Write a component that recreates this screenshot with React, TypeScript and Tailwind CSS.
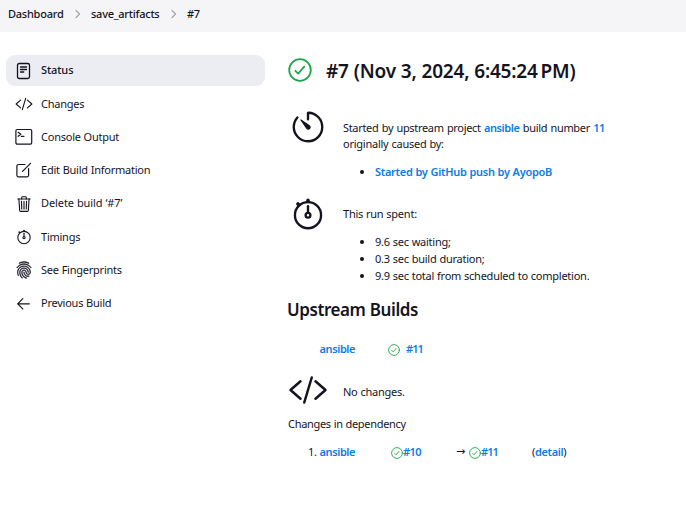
import type { ReactNode } from "react";
import {
  IoCodeSlashOutline,
  IoFingerPrintOutline,
  IoStopwatchOutline,
  IoTimerOutline,
  IoTrashOutline,
} from "react-icons/io5";

function DocumentIcon() {
  return (
    <svg viewBox="0 0 18 18" className="size-[18px]" fill="none" stroke="currentColor" strokeWidth="1.3" strokeLinecap="round">
      <rect x="2.500" y="1.500" width="12" height="15" rx="1.8" />
      <path d="M5.500 5h6M5.500 7.500h6M5.500 10h3.200" />
    </svg>
  );
}

function TerminalIcon() {
  return (
    <svg viewBox="0 0 18 18" className="size-[18px]" fill="none" stroke="currentColor" strokeWidth="1.2" strokeLinecap="round" strokeLinejoin="round">
      <rect x="0.900" y="1.500" width="15.800" height="14.600" rx="1.300" />
      <path d="M3.200 4.300l2.600 2-2.600 2M6.300 8.400h2.600" />
    </svg>
  );
}

function EditIcon() {
  return (
    <svg viewBox="0 0 18 18" className="size-[18px]" fill="none" stroke="currentColor" strokeWidth="1.2" strokeLinecap="round" strokeLinejoin="round">
      <path d="M10 3.500H3.500A1.600 1.600 0 0 0 1.900 5.100V14.300A1.600 1.600 0 0 0 3.500 15.900H12A1.600 1.600 0 0 0 13.600 14.300V7.500" />
      <path d="M7.500 10.300L15.500 2.300" />
    </svg>
  );
}

function ArrowIcon() {
  return (
    <svg viewBox="0 0 18 18" className="size-[18px]" fill="none" stroke="currentColor" strokeWidth="1.2" strokeLinecap="round" strokeLinejoin="round">
      <path d="M7.800 3.700L2.700 8.800l5.100 5.100M2.900 8.800h11.400" />
    </svg>
  );
}

function SuccessIcon({ className }: { className: string }) {
  return (
    <svg viewBox="0 0 24 24" className={`shrink-0 text-[#1ea64b] ${className}`} fill="none" stroke="currentColor" strokeWidth="1.8" strokeLinecap="round" strokeLinejoin="round">
      <circle cx="12" cy="12" r="10.800" />
      <path d="M7.400 12.800l2.800 2.800 6-7" />
    </svg>
  );
}

function Chevron() {
  return (
    <svg viewBox="0 0 6 10" className="h-2.5 w-1.5" fill="none" stroke="#a5a5b5" strokeWidth="1.2" strokeLinecap="round" strokeLinejoin="round">
      <path d="M1 1.500L4.600 5 1 8.500" />
    </svg>
  );
}

function Link({ children }: { children: ReactNode }) {
  return <a className="font-semibold tracking-[-0.4px] text-[#0b7be8]">{children}</a>;
}

const tasks: { label: string; icon: ReactNode; text: string }[] = [
  { label: "Status", icon: <DocumentIcon />, text: "font-medium tracking-[-0.1px]" },
  { label: "Changes", icon: <IoCodeSlashOutline className="size-[18px]" />, text: "" },
  { label: "Console Output", icon: <TerminalIcon />, text: "" },
  { label: "Edit Build Information", icon: <EditIcon />, text: "" },
  { label: "Delete build ‘#7’", icon: <IoTrashOutline className="size-[18px] stroke-[0.5px]" />, text: "tracking-[-0.1px]" },
  { label: "Timings", icon: <IoStopwatchOutline className="size-[18px]" />, text: "" },
  { label: "See Fingerprints", icon: <IoFingerPrintOutline className="size-[18px] stroke-[10px]" />, text: "" },
  { label: "Previous Build", icon: <ArrowIcon />, text: "" },
];

export default function App() {
  return (
    <div className="h-[522px] w-[686px] overflow-hidden whitespace-nowrap bg-white font-['Noto_Sans','Open_Sans',sans-serif] text-[11px] leading-4 tracking-[-0.24px] text-[#14141f] [word-spacing:0.3px]">
      <nav className="flex h-8 items-center bg-[#f5f5f8] pb-[5px] pl-2 font-medium">
        <span className="w-[67px]">Dashboard</span>
        <span className="w-4"><Chevron /></span>
        <span className="w-20">save_artifacts</span>
        <span className="w-4"><Chevron /></span>
        <span>#7</span>
      </nav>

      <div className="flex">
        <aside className="w-[288px] pl-1.5 pt-[23px]">
          {tasks.map((task, i) => (
            <a
              key={task.label}
              className={`mb-[2.3px] flex h-[31px] w-[259px] items-center rounded-[9px] pl-[9px] ${i === 0 ? "bg-[#ecedf3]" : ""}`}
            >
              <span className="mr-2 flex w-[18px] justify-center">{task.icon}</span>
              <span className={`pb-[0.4px] ${task.text}`}>{task.label}</span>
            </a>
          ))}
        </aside>

        <main className="flex-1 pt-[25px]">
          <h1 className="flex h-[26px] items-center pt-px text-[19px] font-semibold tracking-[-0.22px]">
            <SuccessIcon className="mb-[2px] mr-[14px] size-6" />
            #7 (Nov 3, 2024, 6:45:24&#8201;PM)
          </h1>

          <section className="flex pt-[24px]">
            <div className="w-[55px] pl-px pt-px"><IoTimerOutline className="size-[38px]" /></div>
            <div className="pt-[13px]">
              <p className="tracking-[-0.32px] [word-spacing:0.7px]">Started by upstream project <Link>ansible</Link> build number <Link>11</Link></p>
              <p>originally caused by:</p>
              <ul className="list-disc pl-8 pt-3"><li><a className="font-semibold tracking-[-0.28px] text-[#0b7be8]">Started by GitHub push by AyopoB</a></li></ul>
            </div>
          </section>

          <section className="flex pt-[14px]">
            <div className="w-[55px] pl-px pt-px"><IoStopwatchOutline className="size-[38px]" /></div>
            <div className="pt-3">
              <p>This run spent:</p>
              <ul className="list-disc pl-8 pt-[11px] leading-[17px]">
                <li>9.6 sec waiting;</li>
                <li>0.3 sec build duration;</li>
                <li>9.9 sec total from scheduled to completion.</li>
              </ul>
            </div>
          </section>

          <h2 className="-ml-px pt-[14px] text-[17px] font-semibold leading-6 tracking-[-0.42px]">Upstream Builds</h2>
          <div className="mt-[19px] flex h-4 items-center pl-[31.500px]">
            <span className="w-[68px]"><Link>ansible</Link></span>
            <SuccessIcon className="mr-[6.500px] mt-[2px] size-3" />
            <a className="font-semibold tracking-[-0.9px] text-[#0b7be8]">#11</a>
          </div>

          <section className="mt-[14px] flex h-10">
            <div className="-mt-px w-[55px]"><IoCodeSlashOutline className="size-10" /></div>
            <p className="pt-[13px]">No changes.</p>
          </section>
          <p className="mt-[5px] tracking-[-0.31px]">Changes in dependency</p>
          <div className="mt-3 flex h-4 items-center pl-5">
            <span className="w-[11.500px]">1.</span>
            <span className="w-[71.500px]"><Link>ansible</Link></span>
            <SuccessIcon className="mt-[2px] size-3" />
            <span className="w-[53px]"><a className="font-semibold tracking-[-0.6px] text-[#0b7be8]">#10</a></span>
            <span className="w-[13px] font-['DejaVu_Sans']">→</span>
            <SuccessIcon className="mt-[2px] size-3" />
            <span className="w-[51px]"><a className="font-semibold tracking-[-0.9px] text-[#0b7be8]">#11</a></span>
            <span>(<Link>detail</Link>)</span>
          </div>
        </main>
      </div>
    </div>
  );
}
